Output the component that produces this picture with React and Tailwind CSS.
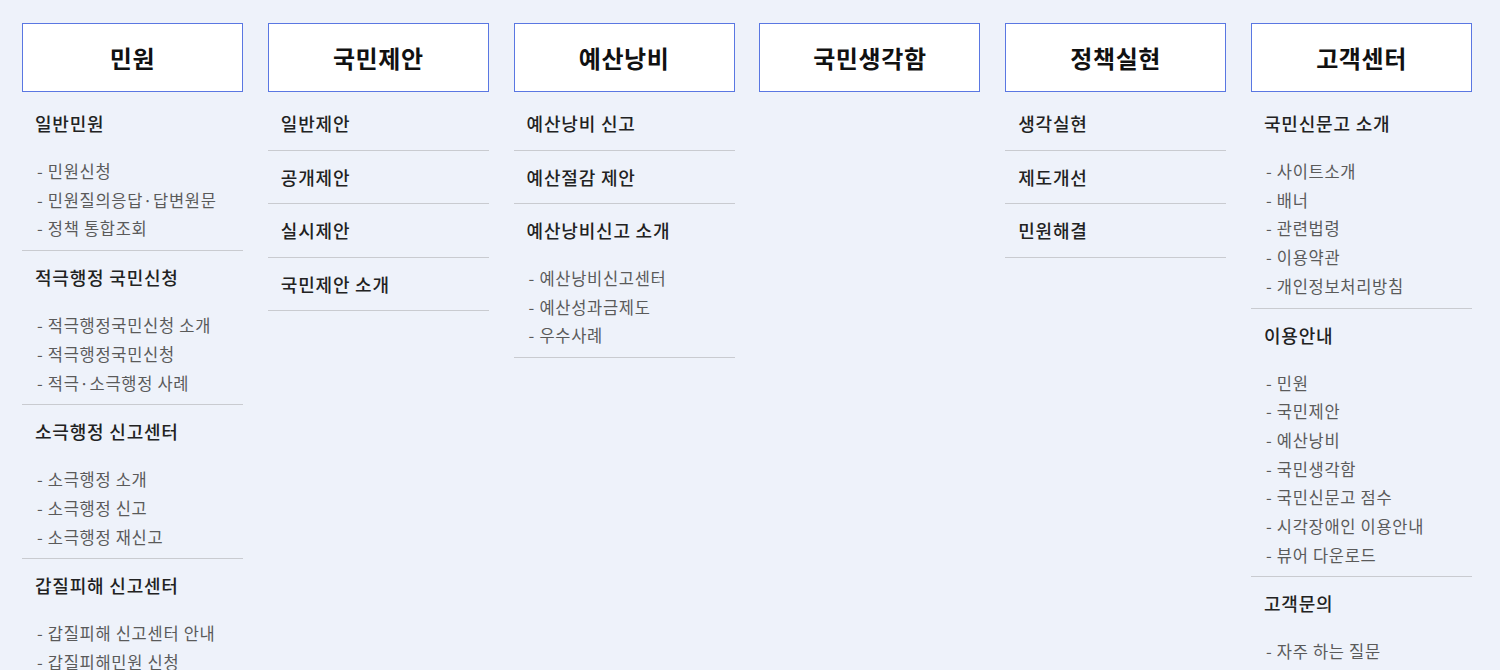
const menus = [
  {
    title: "민원",
    sections: [
      { name: "일반민원", items: ["민원신청", "민원질의응답·답변원문", "정책 통합조회"] },
      { name: "적극행정 국민신청", items: ["적극행정국민신청 소개", "적극행정국민신청", "적극·소극행정 사례"] },
      { name: "소극행정 신고센터", items: ["소극행정 소개", "소극행정 신고", "소극행정 재신고"] },
      { name: "갑질피해 신고센터", items: ["갑질피해 신고센터 안내", "갑질피해민원 신청"] },
    ],
  },
  {
    title: "국민제안",
    sections: [{ name: "일반제안" }, { name: "공개제안" }, { name: "실시제안" }, { name: "국민제안 소개" }],
  },
  {
    title: "예산낭비",
    sections: [
      { name: "예산낭비 신고" },
      { name: "예산절감 제안" },
      { name: "예산낭비신고 소개", items: ["예산낭비신고센터", "예산성과금제도", "우수사례"] },
    ],
  },
  { title: "국민생각함", sections: [] },
  {
    title: "정책실현",
    sections: [{ name: "생각실현" }, { name: "제도개선" }, { name: "민원해결" }],
  },
  {
    title: "고객센터",
    sections: [
      { name: "국민신문고 소개", items: ["사이트소개", "배너", "관련법령", "이용약관", "개인정보처리방침"] },
      {
        name: "이용안내",
        items: ["민원", "국민제안", "예산낭비", "국민생각함", "국민신문고 점수", "시각장애인 이용안내", "뷰어 다운로드"],
      },
      { name: "고객문의", items: ["자주 하는 질문"] },
    ],
  },
];

function Section({ section }) {
  const hasItems = section.items && section.items.length > 0;
  return (
    <li className={"border-b border-[#c9cbd0] " + (hasItems ? "pt-[16px] pb-[7px]" : "pt-[16px] pb-[16.5px]")}>
      <a className="block px-[13px] text-[18px] leading-[20px] font-medium tracking-[0.8px] text-[#222]">
        {section.name}
      </a>
      {hasItems && (
        <ul className="mt-[24px] px-[15px]">
          {section.items.map((item) => (
            <li key={item} className="text-[16.5px] leading-[28.7px] tracking-[0.7px] text-[#5a5a5a] whitespace-nowrap">
              - {item}
            </li>
          ))}
        </ul>
      )}
    </li>
  );
}

export default function App() {
  return (
    <div
      className="min-h-screen bg-[#eef2fa] pt-[23px] pl-[22px]"
      style={{ fontFamily: '"Noto Sans CJK KR", "Noto Sans", sans-serif' }}
    >
      <div className="grid w-[1450px] grid-cols-6 gap-x-[24.8px] items-start">
        {menus.map((menu) => (
          <div key={menu.title}>
            <div className="h-[69px] bg-white border border-[#5a77e2] flex items-center justify-center">
              <h2 className="text-[24px] font-bold tracking-[0.6px] text-[#111]">{menu.title}</h2>
            </div>
            {menu.sections.length > 0 && (
              <ul className="mt-[5px]">
                {menu.sections.map((s) => (
                  <Section key={s.name} section={s} />
                ))}
              </ul>
            )}
          </div>
        ))}
      </div>
    </div>
  );
}
